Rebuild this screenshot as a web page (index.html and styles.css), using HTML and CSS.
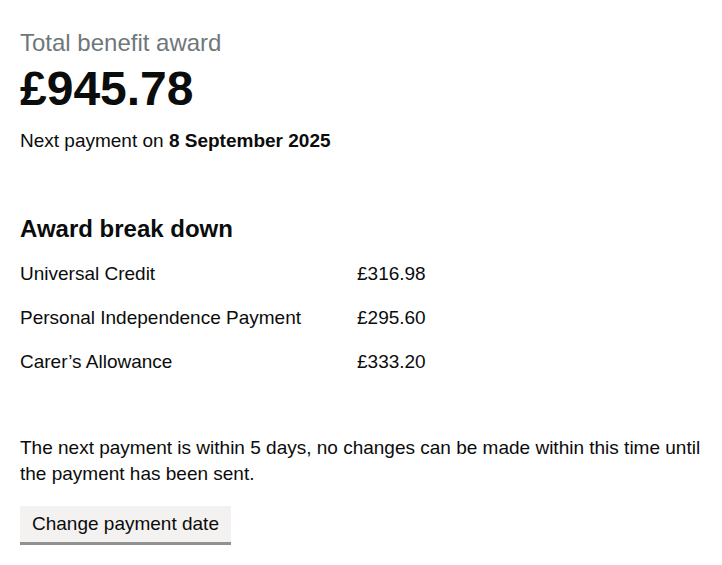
FILE: index.html
```html
<!DOCTYPE html>
<html lang="en">
<head>
<meta charset="utf-8">
<link rel="stylesheet" href="styles.css">
</head>
<body>
<main class="page">
  <section class="summary">
    <p class="caption">Total benefit award</p>
    <p class="total">£945.78</p>
    <p class="next">Next payment on <strong>8 September 2025</strong></p>
  </section>
  <section class="breakdown">
    <h2 class="heading">Award break down</h2>
    <dl class="rows">
      <div class="row"><dt>Universal Credit</dt><dd>£316.98</dd></div>
      <div class="row"><dt>Personal Independence Payment</dt><dd>£295.60</dd></div>
      <div class="row"><dt>Carer’s Allowance</dt><dd>£333.20</dd></div>
    </dl>
  </section>
  <p class="notice">The next payment is within 5 days, no changes can be made within this time until the payment has been sent.</p>
  <button class="button" type="button">Change payment date</button>
</main>
</body>
</html>
```

FILE: styles.css
```css
html, body { margin: 0; padding: 0; background: #fff; }
body {
  font-family: "Liberation Sans", Arial, sans-serif;
  color: #0b0c0c;
}
.page {
  padding: 30px 20px 20px 20px;
  display: flex;
  flex-direction: column;
  align-items: flex-start;
}
p { margin: 0; }
.caption {
  font-size: 24px;
  line-height: 26px;
  color: #6f777b;
}
.total {
  font-size: 48px;
  font-weight: 700;
  line-height: 50px;
  margin-top: 8px;
}
.next {
  font-size: 19px;
  line-height: 24px;
  margin-top: 15px;
}
.breakdown { margin-top: 61px; }
.heading {
  margin: 0;
  font-size: 24px;
  line-height: 30px;
  font-weight: 700;
}
.rows { margin: 18px 0 0 0; display: flex; flex-direction: column; gap: 20px; }
.row { display: grid; grid-template-columns: 337px auto; font-size: 19px; line-height: 24px; }
.row dt, .row dd { margin: 0; }
.notice {
  font-size: 19px;
  line-height: 26px;
  margin-top: 61px;
  margin-right: -20px;
}
.button {
  margin-top: 19px;
  font-family: inherit;
  font-size: 19px;
  line-height: 22px;
  color: #0b0c0c;
  background: #f3f2f1;
  border: 0;
  border-bottom: 3px solid #929191;
  padding: 7px 12px 7px;
  border-radius: 0;
}
```
